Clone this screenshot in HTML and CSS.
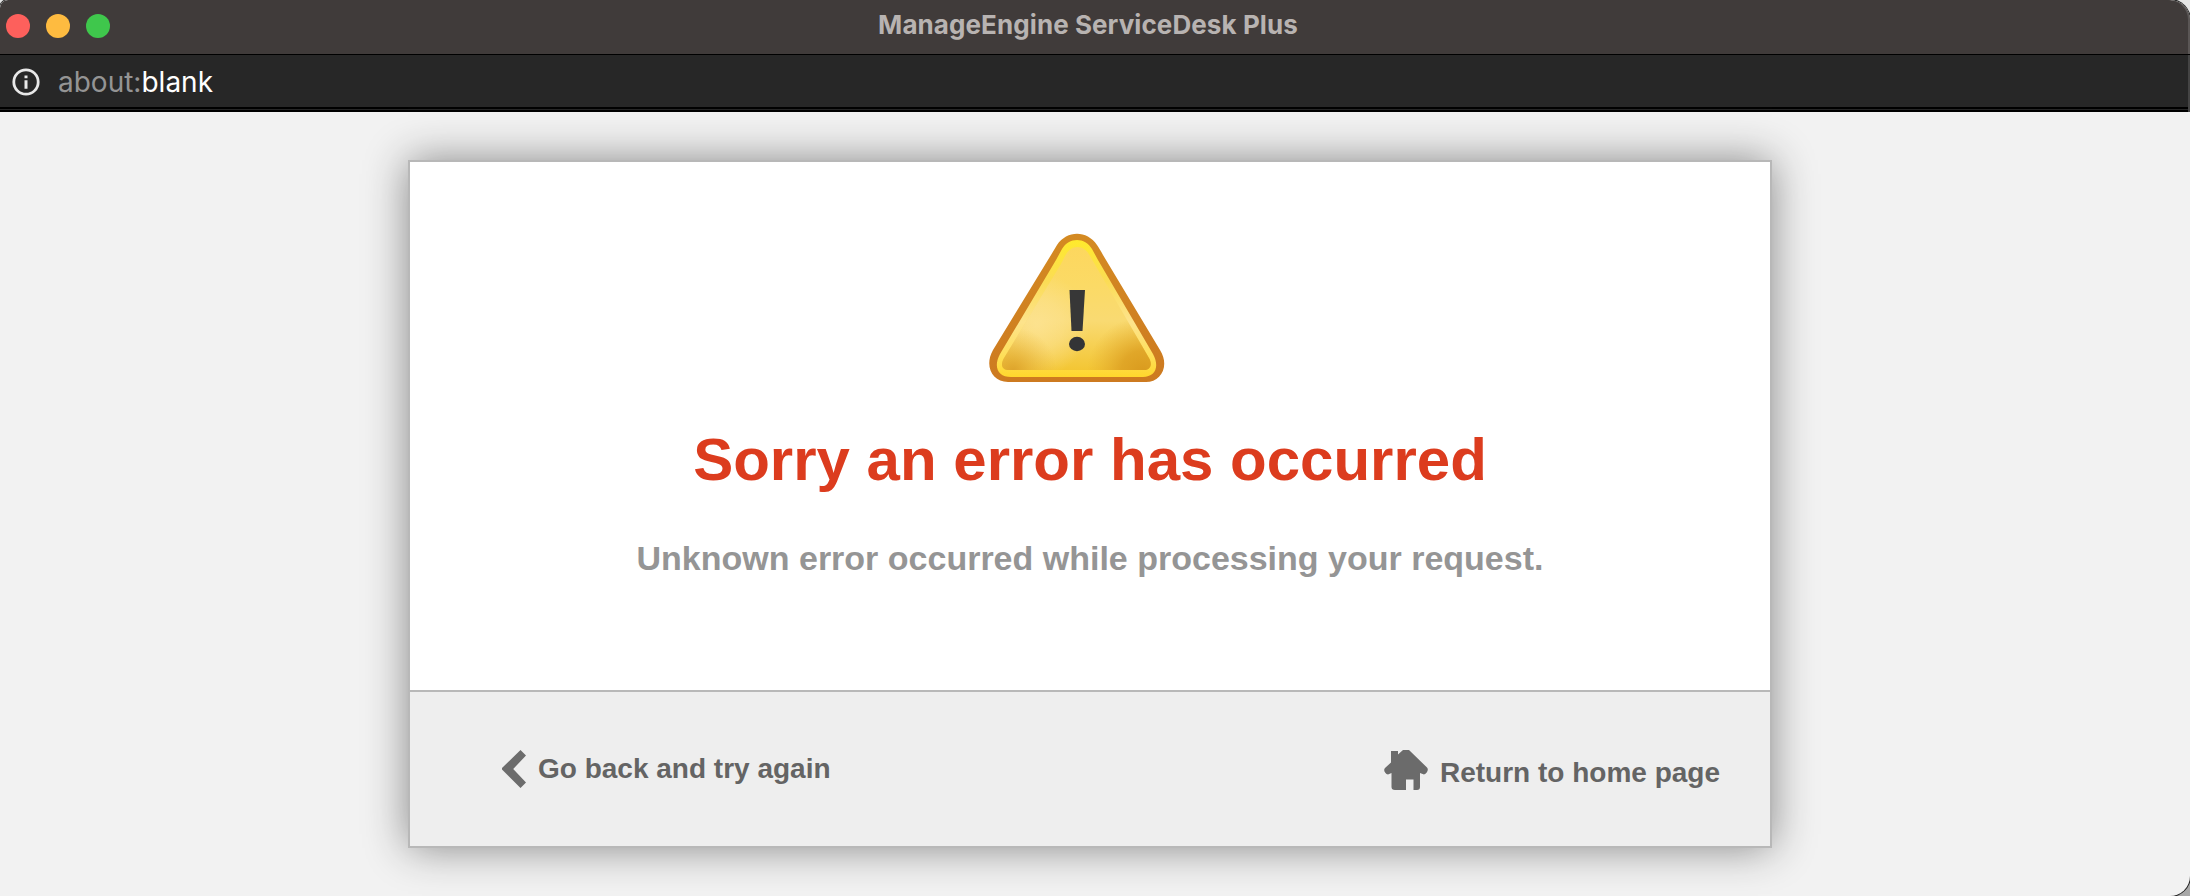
FILE: index.html
```html
<!DOCTYPE html>
<html lang="en">
<head>
  <meta charset="UTF-8" />
  <meta name="viewport" content="width=device-width, initial-scale=1.0"/>
  <title>ManageEngine ServiceDesk Plus</title>
  <link rel="stylesheet" href="styles.css">
</head>
<body>

  <div class="window">
    <!-- Title bar -->
    <header class="titlebar">
      <div class="dots">
        <span class="dot red"></span>
        <span class="dot yellow"></span>
        <span class="dot green"></span>
      </div>
      <div class="title">ManageEngine ServiceDesk Plus</div>
    </header>

    <!-- Address bar -->
    <div class="addressbar">
      <svg class="info-icon" viewBox="0 0 28 28">
        <circle cx="14" cy="14" r="12.2" fill="none" stroke="#e8e8e8" stroke-width="2.8"/>
        <path d="M12.5 7.4h3v2.8h-3zM12.5 12.3h3v8.4h-3z" fill="#e8e8e8"/>
      </svg>
      <div class="url"><span>about:</span>blank</div>
    </div>

    <!-- Page -->
    <main class="page">
      <div class="error-box">
        <div class="error-body">
          <svg class="warning-icon" viewBox="0 0 176 150">
            <defs>
              <linearGradient id="edge" x1="0" y1="0" x2="0" y2="1">
                <stop offset="0" stop-color="#d48a22"/>
                <stop offset="1" stop-color="#cd7a20"/>
              </linearGradient>
              <linearGradient id="rim" x1="0" y1="0" x2="0" y2="1">
                <stop offset="0" stop-color="#ffea2c"/>
                <stop offset="0.3" stop-color="#fbdc55"/>
                <stop offset="0.6" stop-color="#fde38c"/>
                <stop offset="0.85" stop-color="#fedf58"/>
                <stop offset="1" stop-color="#ffd72c"/>
              </linearGradient>
              <linearGradient id="fill" x1="0" y1="0" x2="0" y2="1">
                <stop offset="0" stop-color="#fdd75e"/>
                <stop offset="0.3" stop-color="#fbda65"/>
                <stop offset="0.6" stop-color="#f9da72"/>
                <stop offset="1" stop-color="#f3c634"/>
              </linearGradient>
              <radialGradient id="shadeRight" gradientUnits="userSpaceOnUse" cx="154" cy="140" r="56">
                <stop offset="0" stop-color="#d99a1e"/>
                <stop offset="0.4" stop-color="#dda023" stop-opacity="0.85"/>
                <stop offset="1" stop-color="#e5ae30" stop-opacity="0"/>
              </radialGradient>
              <radialGradient id="shadeLeft" gradientUnits="userSpaceOnUse" cx="24" cy="138" r="44">
                <stop offset="0" stop-color="#dda32c"/>
                <stop offset="1" stop-color="#eab93c" stop-opacity="0"/>
              </radialGradient>
              <radialGradient id="glow" gradientUnits="userSpaceOnUse" cx="48" cy="92" r="52">
                <stop offset="0" stop-color="#fde496" stop-opacity="0.8"/>
                <stop offset="0.5" stop-color="#fde496" stop-opacity="0.5"/>
                <stop offset="1" stop-color="#fde496" stop-opacity="0"/>
              </radialGradient>
            </defs>
            <path fill="url(#edge)" d="M68 12C78-3 98-3 108 12C110 15 112 18 114 22L171 117C181 133 172 149 157 149H19C3 149-5 133 4 117L62 22Z"/>
            <path fill="url(#rim)" d="M73 16C80 4 96 4 103 16L109 27L164 121C171 134 166 144 154 144H22C9 144 4 134 11 121L67 27Z"/>
            <path fill="url(#fill)" d="M76 23C82 11 95 11 101 23L160 125C164 132 161 137 155 137H20C13 137 11 132 15 125L72 31Z"/>
            <path fill="url(#glow)" d="M76 23C82 11 95 11 101 23L160 125C164 132 161 137 155 137H20C13 137 11 132 15 125L72 31Z"/>
            <path fill="url(#shadeLeft)" d="M76 23C82 11 95 11 101 23L160 125C164 132 161 137 155 137H20C13 137 11 132 15 125L72 31Z"/>
            <path fill="url(#shadeRight)" d="M76 23C82 11 95 11 101 23L160 125C164 132 161 137 155 137H20C13 137 11 132 15 125L72 31Z"/>
            <path fill="#373737" d="M80.500 57H96L93.500 98H82.500Z"/>
            <ellipse cx="88" cy="111" rx="8" ry="7.200" fill="#333436"/>
          </svg>
          <h1>Sorry an error has occurred</h1>
          <p>Unknown error occurred while processing your request.</p>
        </div>

        <div class="error-footer">
          <a class="link back" href="#">
            <svg class="back-icon" viewBox="0 0 24 38">
              <path d="M18.500 0L24 5.500L11.200 19L24 32.500L18.500 38L0 19.500V18Z" fill="#6c6c6c"/>
            </svg>
            <span>Go back and try again</span>
          </a>
          <a class="link home" href="#">
            <svg class="home-icon" viewBox="0 0 44 40">
              <path d="M7 1H14V4.500L19 0H25L43 17.500C45 19.500 43 24 40 24.500L36 23V37Q36 40 33 40H29.500V29.500H22V40H11Q7.500 40 7.500 37V23L4 24.500C1 24 -1 20 1 18L7 12.500Z" fill="#6b6b6b"/>
            </svg>
            <span>Return to home page</span>
          </a>
        </div>
      </div>
    </main>
  </div>

</body>
</html>
```
FILE: styles.css
```css
* {
  box-sizing: border-box;
}

html {
  background: linear-gradient(to bottom, #e4e4e4 50%, #a8a8a8 50%);
}

body {
  margin: 0;
  height: 896px;
  font-family: "Liberation Sans", Arial, sans-serif;
}

.window {
  display: flex;
  flex-direction: column;
  height: 896px;
  border-radius: 8px 20px 20px 0;
  overflow: hidden;
  background: #f2f2f2;
  box-shadow: 0 0 0 1px #222;
}

/* title bar */
.titlebar {
  display: grid;
  grid-template-columns: 1fr auto 1fr;
  align-items: center;
  height: 55px;
  padding: 0 20px 2px 6px;
  background: #403b3a;
  border-bottom: 1px solid #000;
  border-radius: 8px 20px 0 0;
  box-shadow: inset -2px 0 0 #5a5655;
}

.dots {
  display: flex;
  gap: 16px;
}

.dot {
  width: 24px;
  height: 24px;
  border-radius: 50%;
}

.red {
  background: #fd605c;
}

.yellow {
  background: #febb40;
}

.green {
  background: #3fc74c;
}

.title {
  margin-top: -3px;
  font-family: Inter, sans-serif;
  font-size: 26px;
  font-weight: 700;
  line-height: 32px;
  letter-spacing: 0.08px;
  color: #b8b3b1;
}

/* address bar */
.addressbar {
  display: flex;
  align-items: center;
  gap: 18px;
  height: 57px;
  padding: 0 0 4px 12px;
  background: linear-gradient(to bottom, #272727 52px, #000 52px, #000 54px, #262626 54px, #262626 55px, #000 55px);
  box-shadow: inset -2px 0 0 #444;
}

.info-icon {
  width: 28px;
  height: 28px;
}

.url {
  font-family: Inter, sans-serif;
  font-size: 28px;
  line-height: 36px;
  color: #fff;
}

.url span {
  color: #949494;
}

/* error box */
.page {
  flex: 1;
  display: flex;
  justify-content: center;
  align-items: flex-start;
  padding: 48px 10px 0 0;
}

.error-box {
  width: 1364px;
  height: 688px;
  background: #fff;
  border: 2px solid #b8b8b8;
  box-shadow: 0 0 40px #888;
}

.error-body {
  display: flex;
  flex-direction: column;
  align-items: center;
  height: 528px;
  padding-top: 71px;
}

.warning-icon {
  width: 176px;
  height: 150px;
  margin-right: 26px;
}

h1 {
  margin: 42px 0 0;
  font-size: 60px;
  line-height: 70px;
  color: #dc3c1e;
}

p {
  margin: 43px 0 0;
  font-size: 34px;
  font-weight: bold;
  line-height: 40px;
  color: #959595;
}

.error-footer {
  display: flex;
  justify-content: space-between;
  align-items: flex-start;
  height: 156px;
  padding: 58px 50px 0 92px;
  background: #eee;
  border-top: 2px solid #b8b8b8;
}

.link {
  display: flex;
  gap: 12px;
  font-size: 28px;
  font-weight: bold;
  line-height: 32px;
  color: #646464;
  text-decoration: none;
}

.back span {
  margin-top: 3px;
}

.home span {
  margin-top: 7px;
}

.back-icon {
  width: 24px;
  height: 38px;
}

.home-icon {
  width: 44px;
  height: 40px;
}
```
